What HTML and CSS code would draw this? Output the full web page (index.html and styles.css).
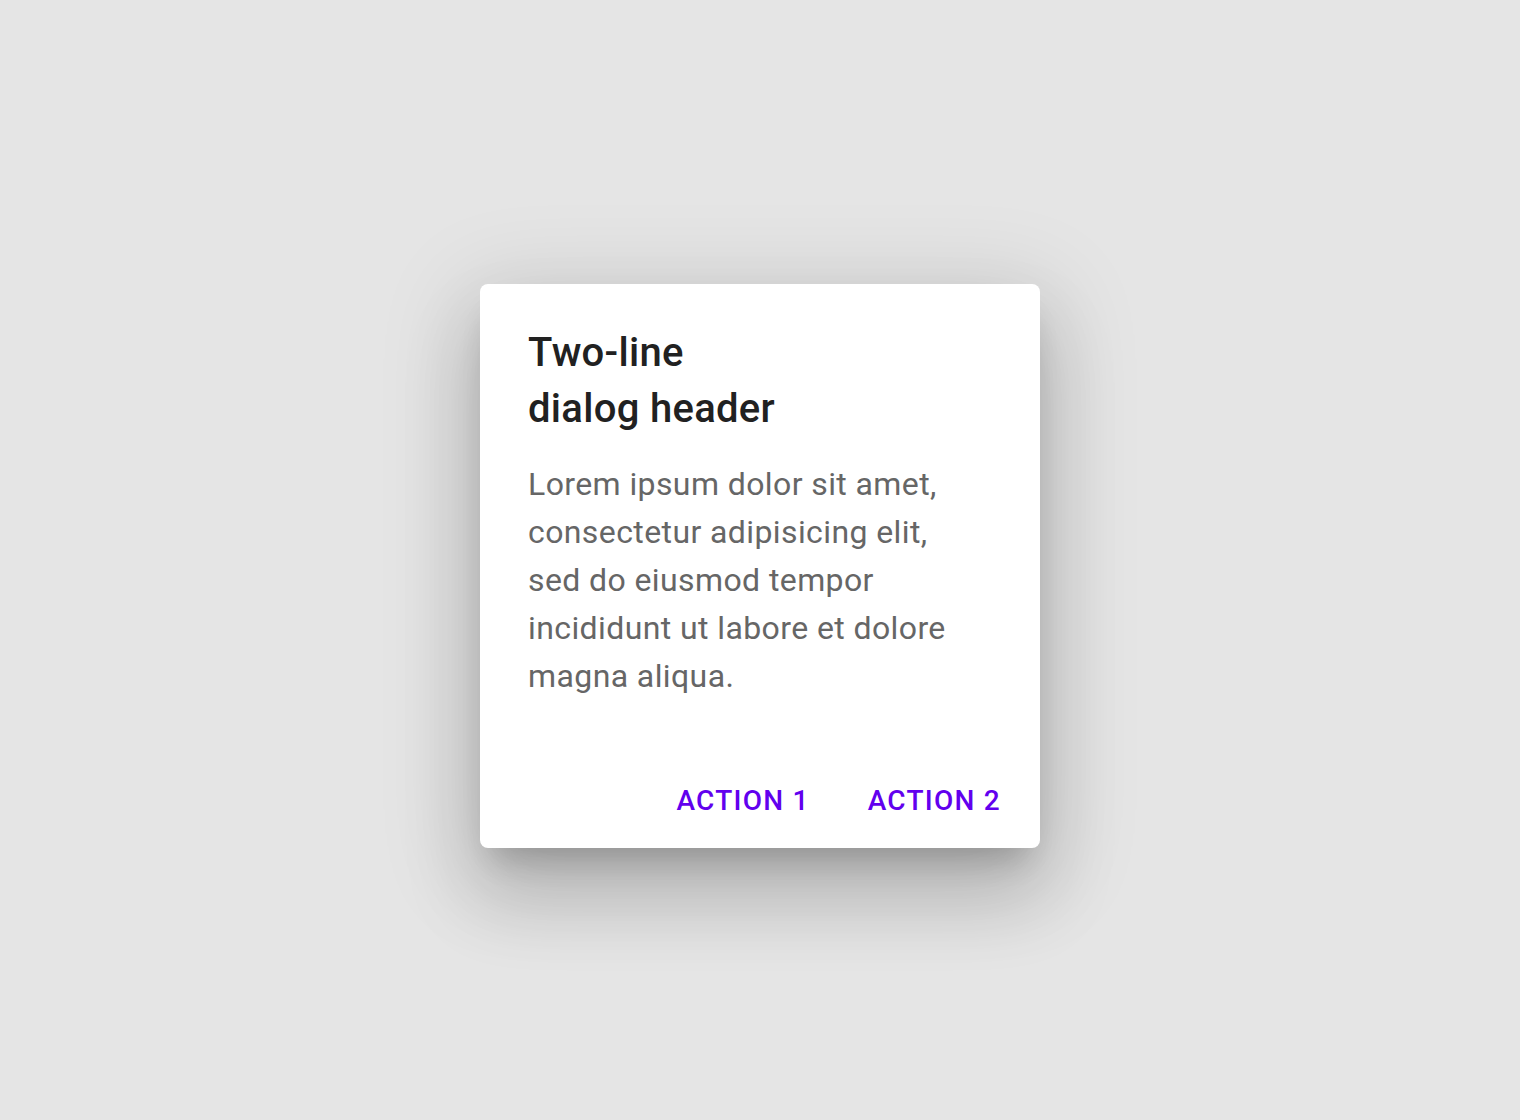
FILE: index.html
```html
<!DOCTYPE html>
<html lang="en">
<head>
    <meta charset="UTF-8">
    <meta name="viewport" content="width=device-width, initial-scale=1.0">
    <title>Dialog</title>
    <link rel="stylesheet" href="styles.css">
</head>
<body>
    <div class="dialog">
        <h2 class="dialog-title">Two-line<br>dialog header</h2>
        <p class="dialog-content">Lorem ipsum dolor sit amet, consectetur adipisicing elit, sed do eiusmod tempor incididunt ut labore et dolore magna aliqua.</p>
        <div class="dialog-actions">
            <button class="dialog-button">Action 1</button>
            <button class="dialog-button">Action 2</button>
        </div>
    </div>
</body>
</html>
```

FILE: styles.css
```css
html, body {
    margin: 0;
    height: 100%;
}

body {
    font-family: Roboto, "Noto Sans", sans-serif;
    background-color: #e5e5e5;
    display: flex;
    align-items: center;
    justify-content: center;
}

.dialog {
    width: 560px;
    box-sizing: border-box;
    margin-top: 12px;
    background-color: #fff;
    border-radius: 8px;
    box-shadow: 0 22px 30px -14px rgba(0, 0, 0, 0.2),
                0 48px 76px 6px rgba(0, 0, 0, 0.14),
                0 18px 92px 16px rgba(0, 0, 0, 0.12);
}

.dialog-title {
    margin: 0;
    padding: 41px 48px 0;
    font-size: 40px;
    font-weight: 500;
    line-height: 56px;
    letter-spacing: 0.3px;
    color: #212121;
}

.dialog-content {
    max-width: 434px;
    margin: 23px 0 0;
    padding: 0 48px;
    font-size: 32px;
    line-height: 48px;
    letter-spacing: 0.4px;
    color: #666;
}

.dialog-actions {
    display: flex;
    justify-content: flex-end;
    gap: 26px;
    padding: 64px 23px 12px;
}

.dialog-button {
    height: 72px;
    padding: 0 16px;
    border: none;
    background: none;
    font-family: Roboto, "Noto Sans", sans-serif;
    font-size: 28px;
    font-weight: 500;
    letter-spacing: 1.25px;
    text-transform: uppercase;
    color: #6200ee;
    cursor: pointer;
}
```
